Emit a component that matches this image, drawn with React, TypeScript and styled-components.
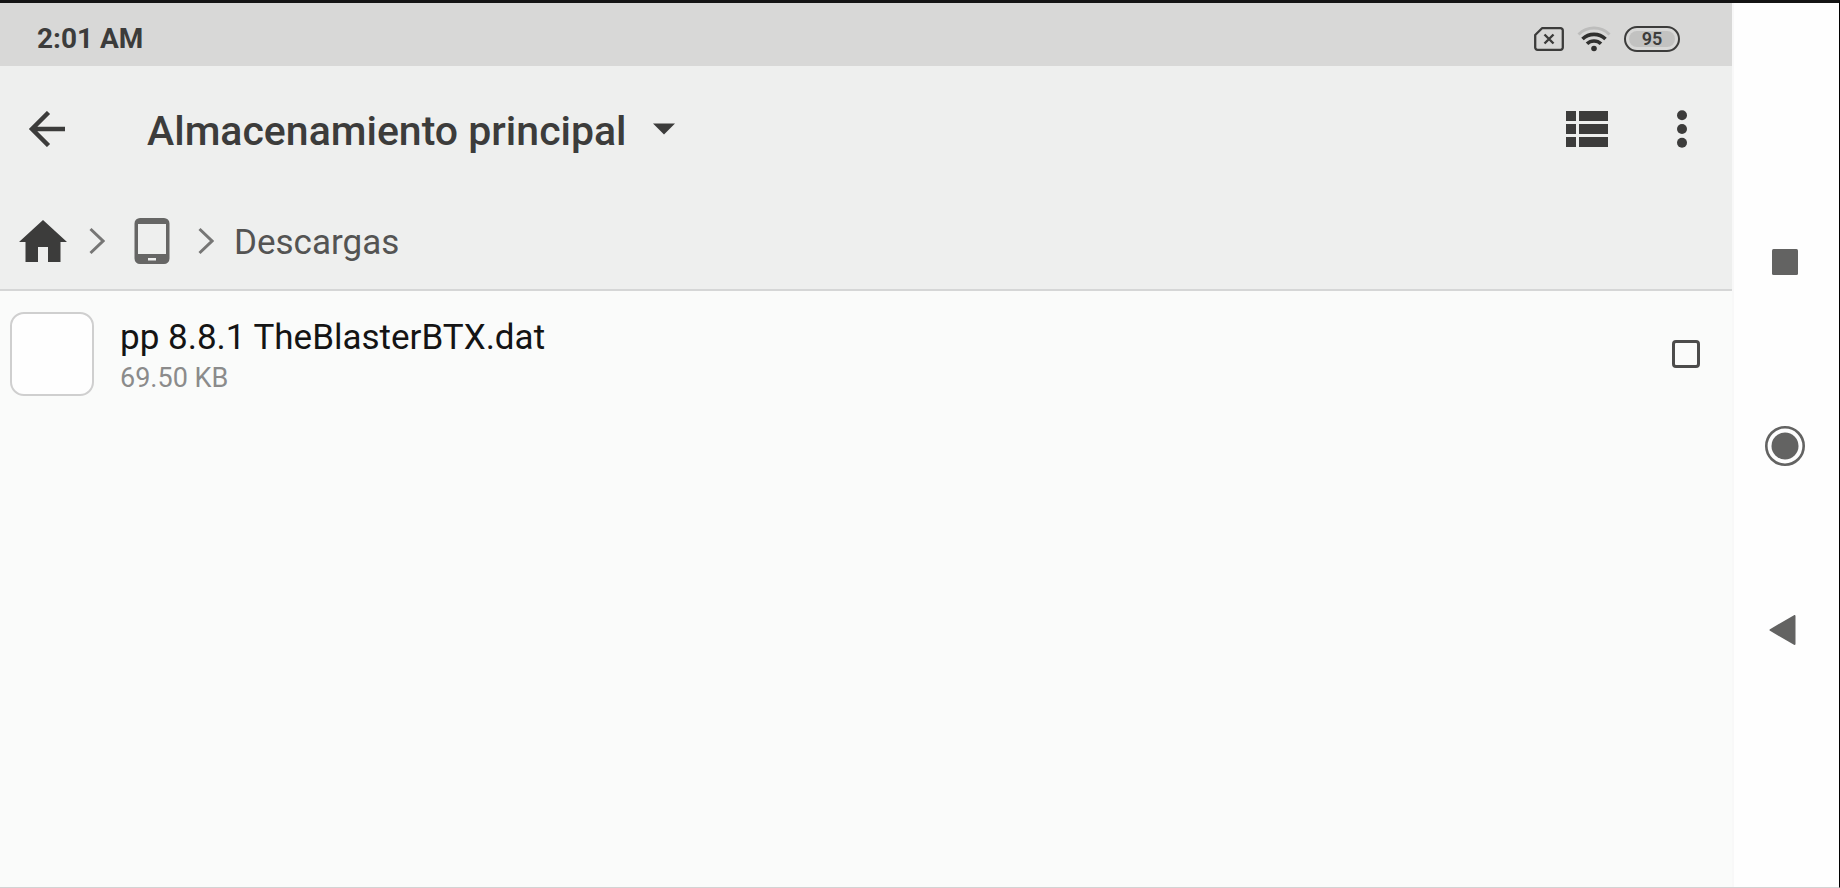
import React from "react";
import styled, { createGlobalStyle } from "styled-components";

const GlobalStyle = createGlobalStyle`
  *, *::before, *::after { box-sizing: border-box; }
  body {
    margin: 0;
    background: #fafbfa;
    font-family: Roboto, "Liberation Sans", sans-serif;
    color: #3c3c3b;
  }
  svg { display: block; flex: none; }
`;

const Screen = styled.div`
  display: flex;
  min-height: 100vh;
  border-top: 3px solid #141414;
  border-right: 1px solid #000;
  border-bottom: 1px solid #d2d3d3;
`;

const Content = styled.div`
  flex: 1;
  min-width: 0;
  display: flex;
  flex-direction: column;
  background: #fafbfa;
`;

const StatusBar = styled.div`
  display: flex;
  align-items: center;
  justify-content: space-between;
  height: 63px;
  padding: 8px 52px 0 37px;
  background: #d8d8d7;
`;

const Clock = styled.time`
  font-size: 28px;
  line-height: 32px;
  font-weight: 700;
`;

const StatusIcons = styled.div`
  display: flex;
  align-items: center;
  gap: 13px;
  height: 32px;
`;

const Battery = styled.div`
  display: flex;
  width: 56px;
  height: 26px;
  padding: 3px;
  border: 2px solid #3c3c3b;
  border-radius: 13px;
`;

const BatteryLevel = styled.span`
  flex: 1;
  border-radius: 8px;
  background: #c2c2c1;
  font-size: 18px;
  line-height: 16px;
  font-weight: 600;
  text-align: center;
`;

const Header = styled.header`
  background: #eeefee;
  border-bottom: 2px solid #d5d6d6;
`;

const Toolbar = styled.div`
  display: flex;
  align-items: center;
  height: 126px;
  padding: 0 26px 0 23px;
`;

const IconButton = styled.button`
  display: flex;
  align-items: center;
  justify-content: center;
  width: 48px;
  height: 48px;
  padding: 0;
  border: 0;
  background: none;
  color: inherit;
  cursor: pointer;
`;

const LocationPicker = styled.label`
  position: relative;
  display: flex;
  align-items: center;
  margin: 0 auto 0 76px;
`;

const LocationSelect = styled.select`
  appearance: none;
  padding: 4px 48px 0 0;
  border: 0;
  background: none;
  color: inherit;
  font: 500 41px/48px Roboto, "Liberation Sans", sans-serif;
  cursor: pointer;
`;

const SelectArrow = styled.svg`
  position: absolute;
  right: 0;
  pointer-events: none;
`;

const Actions = styled.div`
  display: flex;
  gap: 47px;
`;

const Breadcrumbs = styled.nav`
  display: flex;
  align-items: center;
  height: 97px;
  padding: 0 19px;
`;

const Crumb = styled.a<{ $spaced?: boolean }>`
  display: flex;
  color: ${(p) => (p.$spaced ? "#666665" : "#3c3c3b")};
  margin: ${(p) => (p.$spaced ? "0 28px 0 29px" : "0 22px 0 0")};
`;

const CurrentCrumb = styled.a`
  margin-left: 20px;
  padding-top: 4px;
  font-size: 35px;
  line-height: 40px;
  color: #545453;
  text-decoration: none;
`;

const FileList = styled.ul`
  flex: 1;
  margin: 0;
  padding: 13px 0;
  list-style: none;
`;

const FileRow = styled.li`
  display: flex;
  align-items: center;
  padding: 8px 32px 8px 10px;
`;

const Thumbnail = styled.span`
  width: 84px;
  height: 84px;
  border: 2px solid #cfcfcf;
  border-radius: 14px;
  background: #fefefe;
`;

const FileInfo = styled.label`
  flex: 1;
  display: flex;
  flex-direction: column;
  margin-left: 26px;
  padding-top: 4px;
`;

const FileName = styled.span`
  font-size: 35px;
  line-height: 44px;
  color: #141414;
`;

const FileSize = styled.span`
  font-size: 27px;
  line-height: 36px;
  color: #8b8b8b;
`;

const SelectBox = styled.input`
  appearance: none;
  width: 28px;
  height: 28px;
  margin: 0;
  border: 3px solid #4c4c4b;
  border-radius: 4px;
  &:checked { background: #4c4c4b; }
`;

const SystemNav = styled.nav`
  display: flex;
  flex-direction: column;
  align-items: center;
  justify-content: center;
  gap: 136px;
  width: 107px;
  padding: 2px 3px 0 0;
  background: #fefefe;
  border-left: 2px solid #f8f8f8;
  color: #636362;
`;

const ChevronRight = () => (
  <svg width="16" height="28" viewBox="0 0 16 28" fill="none" stroke="#767675" strokeWidth="3" aria-hidden="true">
    <path d="M1.500 2 14 14 1.500 26" />
  </svg>
);

const NoSimIcon = () => (
  <svg width="30" height="24" viewBox="0 0 30 24" fill="none" stroke="#3c3c3b" strokeWidth="2.300" aria-label="Sin SIM">
    <path d="M8 1.200H26.500a2.300 2.300 0 0 1 2.300 2.300V20.500a2.300 2.300 0 0 1-2.300 2.300H3.500a2.300 2.300 0 0 1-2.300-2.300V8Z" strokeLinejoin="round" />
    <path d="m10.500 7.500 9 9m0-9-9 9" strokeWidth="2.400" />
  </svg>
);

const WifiIcon = () => (
  <svg width="34" height="26" viewBox="0 0 34 26" fill="none" stroke="#30302f" aria-label="Wi-Fi">
    <path d="M1.500 8.500A22 22 0 0 1 32.500 8.500" stroke="#bdbdbc" strokeWidth="3" />
    <path d="M5.500 13A16.500 16.500 0 0 1 28.500 13" strokeWidth="3.600" />
    <path d="M10 17.800A10 10 0 0 1 24 17.800" strokeWidth="3.600" />
    <circle cx="17" cy="22.500" r="2.800" fill="#30302f" stroke="none" />
  </svg>
);

const files = [{ id: "pp-dat", name: "pp 8.8.1 TheBlasterBTX.dat", size: "69.50 KB" }];

export default function App() {
  return (
    <>
      <GlobalStyle />
      <Screen>
        <Content>
          <StatusBar>
            <Clock dateTime="02:01">2:01 AM</Clock>
            <StatusIcons>
              <NoSimIcon />
              <WifiIcon />
              <Battery>
                <BatteryLevel>95</BatteryLevel>
              </Battery>
            </StatusIcons>
          </StatusBar>

          <Header>
            <Toolbar>
              <IconButton aria-label="Atrás">
                <svg width="38" height="36" viewBox="0 0 38 36" fill="none" stroke="currentColor" strokeWidth="4.500">
                  <path d="M37 18H4M20.500 1.500 4 18l16.500 16.500" />
                </svg>
              </IconButton>
              <LocationPicker>
                <LocationSelect aria-label="Ubicación">
                  <option>Almacenamiento principal</option>
                </LocationSelect>
                <SelectArrow width="22" height="12" viewBox="0 0 22 12" fill="currentColor" aria-hidden="true">
                  <path d="M0 .5H22L11 11.500Z" />
                </SelectArrow>
              </LocationPicker>
              <Actions>
                <IconButton aria-label="Cambiar vista">
                  <svg width="42" height="36" viewBox="0 0 42 36" fill="currentColor">
                    <path d="M0 0h10v10H0zM13 0h29v10H13zM0 13h10v10H0zM13 13h29v10H13zM0 26h10v10H0zM13 26h29v10H13z" />
                  </svg>
                </IconButton>
                <IconButton aria-label="Más opciones">
                  <svg width="10" height="38" viewBox="0 0 10 38" fill="currentColor">
                    <circle cx="5" cy="5.200" r="5" />
                    <circle cx="5" cy="19" r="5" />
                    <circle cx="5" cy="32.800" r="5" />
                  </svg>
                </IconButton>
              </Actions>
            </Toolbar>

            <Breadcrumbs aria-label="Ruta">
              <Crumb href="#inicio" aria-label="Inicio">
                <svg width="48" height="42" viewBox="0 0 48 42" fill="currentColor">
                  <path d="M24 0 48 22H41.500V42H29V27H19V42H6.500V22H0Z" />
                </svg>
              </Crumb>
              <ChevronRight />
              <Crumb href="#almacenamiento" aria-label="Almacenamiento" $spaced>
                <svg width="36" height="46" viewBox="0 0 36 46" fill="currentColor">
                  <path
                    fillRule="evenodd"
                    d="M6 0H30a5.500 5.500 0 0 1 5.500 5.500V40.500A5.500 5.500 0 0 1 30 46H6A5.500 5.500 0 0 1 .5 40.500V5.500A5.500 5.500 0 0 1 6 0ZM4 6V36H32V6ZM14 40v2.500h8V40Z"
                  />
                </svg>
              </Crumb>
              <ChevronRight />
              <CurrentCrumb href="#descargas">Descargas</CurrentCrumb>
            </Breadcrumbs>
          </Header>

          <FileList>
            {files.map((file) => (
              <FileRow key={file.id}>
                <Thumbnail />
                <FileInfo htmlFor={file.id}>
                  <FileName>{file.name}</FileName>
                  <FileSize>{file.size}</FileSize>
                </FileInfo>
                <SelectBox type="checkbox" id={file.id} />
              </FileRow>
            ))}
          </FileList>
        </Content>

        <SystemNav aria-label="Navegación del sistema">
          <IconButton aria-label="Recientes">
            <svg width="26" height="26" viewBox="0 0 26 26" fill="currentColor">
              <rect width="26" height="26" rx="1.500" />
            </svg>
          </IconButton>
          <IconButton aria-label="Pantalla de inicio">
            <svg width="40" height="40" viewBox="0 0 40 40" fill="currentColor">
              <circle cx="20" cy="20" r="18.700" fill="none" stroke="currentColor" strokeWidth="2.600" />
              <circle cx="20" cy="20" r="13.500" />
            </svg>
          </IconButton>
          <IconButton aria-label="Volver">
            <svg width="32" height="30" viewBox="0 0 32 30" fill="currentColor" stroke="currentColor" strokeWidth="2" strokeLinejoin="round">
              <path d="M25.500 1V29L1.500 15Z" />
            </svg>
          </IconButton>
        </SystemNav>
      </Screen>
    </>
  );
}
